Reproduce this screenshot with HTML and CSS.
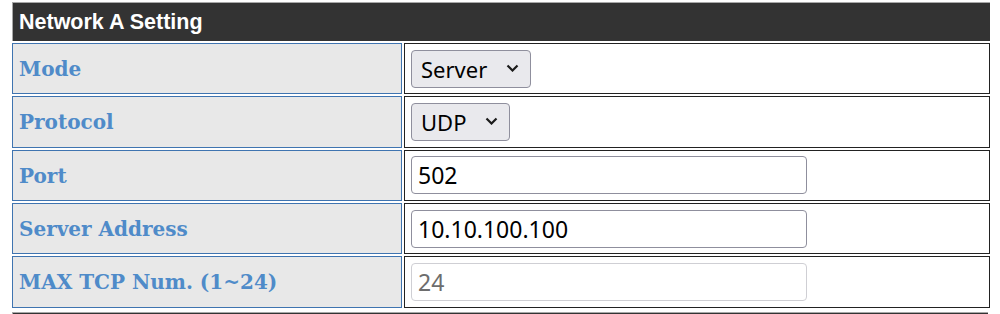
FILE: index.html
```html
<!DOCTYPE html>
<html lang="en">
<head>
    <meta charset="UTF-8">
    <meta name="viewport" content="width=device-width, initial-scale=1.0">
    <title>Network Setting</title>
    <link rel="stylesheet" href="styles.css">
</head>
<body>
    <table class="settings">
        <tr>
            <th class="title" colspan="2">Network A Setting</th>
        </tr>
        <tr>
            <td class="label">Mode</td>
            <td class="value">
                <span class="select-wrap">
                    <select name="mode_a">
                        <option selected>Server</option>
                        <option>Client</option>
                    </select>
                    <svg class="chevron" width="13" height="8" viewBox="0 0 13 8"><path d="M1.5 1.5 L6.5 6.5 L11.5 1.5" /></svg>
                </span>
            </td>
        </tr>
        <tr>
            <td class="label">Protocol</td>
            <td class="value">
                <span class="select-wrap">
                    <select name="protocol_a">
                        <option>TCP</option>
                        <option selected>UDP</option>
                    </select>
                    <svg class="chevron" width="13" height="8" viewBox="0 0 13 8"><path d="M1.5 1.5 L6.5 6.5 L11.5 1.5" /></svg>
                </span>
            </td>
        </tr>
        <tr>
            <td class="label">Port</td>
            <td class="value"><input type="text" name="port_a" value="502"></td>
        </tr>
        <tr>
            <td class="label">Server Address</td>
            <td class="value"><input type="text" name="server_a" value="10.10.100.100"></td>
        </tr>
        <tr>
            <td class="label">MAX TCP Num. (1~24)</td>
            <td class="value"><input type="text" name="max_tcp_a" value="24" disabled></td>
        </tr>
    </table>

    <!-- next section starts just below the fold -->
    <div class="next-section"></div>
</body>
</html>
```

FILE: styles.css
```css
body {
    margin: 0;
    padding: 0;
    background-color: #ffffff;
    font-family: "Liberation Sans", Arial, sans-serif;
}
.settings {
    width: 982px;
    margin: 0 10px;
    border-collapse: separate;
    border-spacing: 2px;
}
.title {
    padding: 0 6px;
    text-align: left;
    background-color: #333333;
    color: #ffffff;
    font-size: 21.5px;
    font-weight: bold;
    line-height: 38px;
    border-top: 1px solid #a8a8a8;
    border-left: 1px solid #a8a8a8;
}
.label {
    width: 376px;
    padding: 2px 6px 0;
    background-color: #e8e8e8;
    border: 1px solid #3f74b0;
    color: #4f8bc9;
    font-family: "DejaVu Serif", "Liberation Serif", serif;
    font-size: 20px;
    font-weight: bold;
    line-height: 47.33px;
    vertical-align: middle;
}
.value {
    padding: 0 6px;
    border: 1px solid #222222;
    vertical-align: middle;
}
.select-wrap {
    position: relative;
    display: block;
    width: fit-content;
}
select {
    display: block;
    height: 38px;
    margin: 0;
    padding: 0 42px 0 9px;
    appearance: none;
    -webkit-appearance: none;
    background-color: #e9e9ed;
    border: 1px solid #8f8f9d;
    border-radius: 4px;
    color: #000000;
    font-family: "Noto Sans", "Open Sans", sans-serif;
    font-size: 22px;
}
.chevron {
    position: absolute;
    right: 12px;
    top: 14px;
    pointer-events: none;
}
.chevron path {
    fill: none;
    stroke: #1b1b1b;
    stroke-width: 2.2;
}
input {
    display: block;
    box-sizing: border-box;
    width: 396px;
    height: 38px;
    margin: 0;
    padding: 0 6px;
    background-color: #ffffff;
    border: 1px solid #8f8f9d;
    border-radius: 4px;
    color: #000000;
    font-family: "Noto Sans", "Open Sans", sans-serif;
    font-size: 23px;
}
input:disabled {
    border-color: #cfcfd4;
    color: #6d6d6d;
    background-color: #ffffff;
}
.next-section {
    height: 38px;
    margin: 2px 12px 0;
    background-color: #333333;
    border-top: 1px solid #a8a8a8;
    border-left: 1px solid #a8a8a8;
}
```
